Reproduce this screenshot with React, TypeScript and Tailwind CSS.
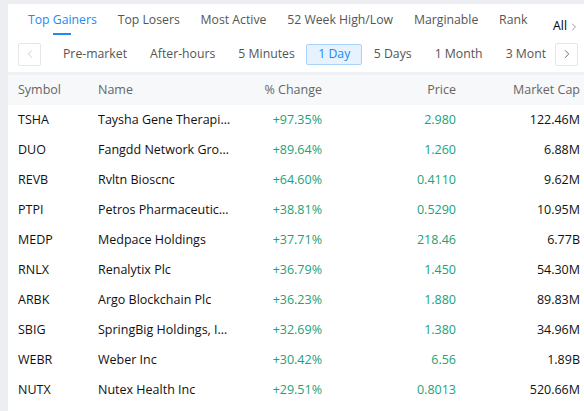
import { ChevronLeft, ChevronRight } from 'lucide-react';

const tabs = ['Top Gainers', 'Top Losers', 'Most Active', '52 Week High/Low', 'Marginable', 'Rank'];
const periods = ['Pre-market', 'After-hours', '5 Minutes', '1 Day', '5 Days', '1 Month', '3 Months'];

const rows = [
  ['TSHA', 'Taysha Gene Therapies Inc', '+97.35%', '2.980', '122.46M'],
  ['DUO', 'Fangdd Network Group Ltd', '+89.64%', '1.260', '6.88M'],
  ['REVB', 'Rvltn Bioscnc', '+64.60%', '0.4110', '9.62M'],
  ['PTPI', 'Petros Pharmaceuticals Inc', '+38.81%', '0.5290', '10.95M'],
  ['MEDP', 'Medpace Holdings', '+37.71%', '218.46', '6.77B'],
  ['RNLX', 'Renalytix Plc', '+36.79%', '1.450', '54.30M'],
  ['ARBK', 'Argo Blockchain Plc', '+36.23%', '1.880', '89.83M'],
  ['SBIG', 'SpringBig Holdings, Inc', '+32.69%', '1.380', '34.96M'],
  ['WEBR', 'Weber Inc', '+30.42%', '6.56', '1.89B'],
  ['NUTX', 'Nutex Health Inc', '+29.51%', '0.8013', '520.66M'],
];

export default function App() {
  return (
    <div className="w-[584px] h-[411px] bg-[#eceef2] pt-[4px] pl-[8px] overflow-hidden font-['Open_Sans',sans-serif] text-[12.5px] whitespace-nowrap">
      <div className="bg-white h-full flex flex-col">
        {/* Tabs */}
        <div className="h-[33px] flex items-end pl-[20px] pr-[4px] shrink-0 text-[12.25px]">
          {tabs.map((t, i) => (
            <div key={t} className="relative mr-[20.8px] h-[33px] flex items-center">
              <span className={i === 0 ? 'text-[#2489f2]' : 'text-[#555]'}>{t}</span>
              {i === 0 && <div className="absolute bottom-[2px] left-1/2 -translate-x-1/2 w-[18px] h-[2px] bg-[#2489f2]"></div>}
            </div>
          ))}
          <div className="ml-auto flex items-center h-[33px] pt-[12px] text-black">
            <span>All</span>
            <ChevronRight className="w-[12px] h-[12px] text-[#999] ml-[1px]" strokeWidth={2} />
          </div>
        </div>

        {/* Period selector */}
        <div className="h-[38px] flex items-center pl-[10px] pr-[6px] pb-[1px] border-b-[3px] border-[#f0f1f4] shrink-0 text-[12.25px]">
          <button className="w-[23px] h-[23px] border border-[#e4e6ea] rounded-[2px] flex items-center justify-center shrink-0">
            <ChevronLeft className="w-[14px] h-[14px] text-[#ccc]" strokeWidth={1.6} />
          </button>
          <div className="flex-1 min-w-0 overflow-hidden flex items-center pl-[10.5px]">
            {periods.map((p) =>
              p === '1 Day' ? (
                <div key={p} className="px-[11px] h-[21px] flex items-center bg-[#e6f2fe] border border-[#a8d1fb] rounded-[2px] text-[#2489f2] shrink-0">
                  {p}
                </div>
              ) : (
                <div key={p} className="px-[11.5px] text-[#555] shrink-0">
                  {p}
                </div>
              )
            )}
          </div>
          <button className="w-[23px] h-[23px] border border-[#e4e6ea] rounded-[2px] flex items-center justify-center shrink-0 ml-[9px] bg-white">
            <ChevronRight className="w-[14px] h-[14px] text-[#666]" strokeWidth={1.6} />
          </button>
        </div>

        {/* Table header */}
        <div className="h-[30px] bg-[#f7f8fa] flex items-center text-[#666] shrink-0">
          <div className="w-[90px] pl-[10px]">Symbol</div>
          <div className="w-[165px]">Name</div>
          <div className="w-[59px] text-right">% Change</div>
          <div className="w-[134px] text-right">Price</div>
          <div className="w-[124px] text-right">Market Cap</div>
        </div>

        {/* Rows */}
        {rows.map(([sym, name, chg, price, cap]) => (
          <div key={sym} className="h-[30px] flex items-center text-[#111] shrink-0">
            <div className="w-[90px] pl-[10px]">{sym}</div>
            <div className="w-[165px] pr-[32px] truncate">{name}</div>
            <div className="w-[59px] text-right text-[#19a37a]">{chg}</div>
            <div className="w-[134px] text-right text-[#19a37a]">{price}</div>
            <div className="w-[124px] text-right">{cap}</div>
          </div>
        ))}
      </div>
    </div>
  );
}
